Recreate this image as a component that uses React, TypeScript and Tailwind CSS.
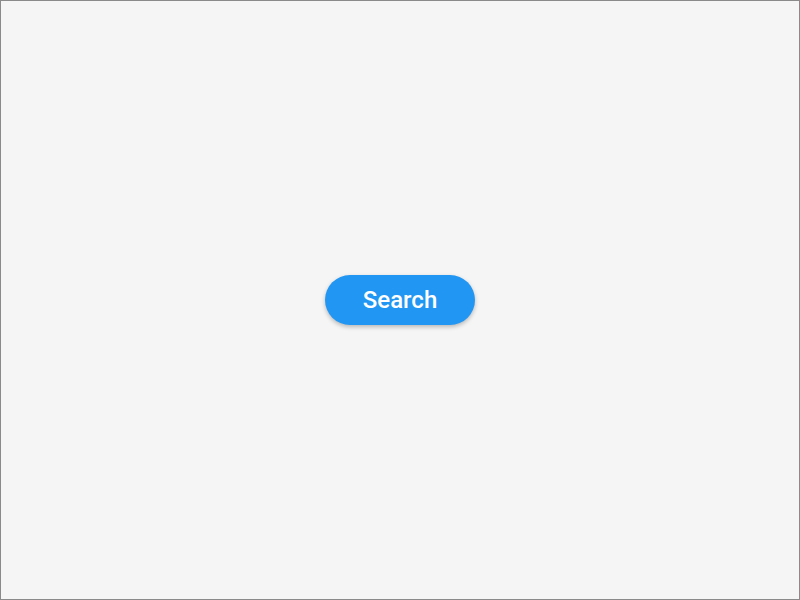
export default function App() {
  return (
    <div
      className="w-[800px] h-[600px] bg-[#f5f5f5] border border-[#8a8a8a] flex items-center justify-center"
      style={{ fontFamily: "Roboto, 'Liberation Sans', sans-serif" }}
    >
      <button className="w-[150px] h-[50px] rounded-full bg-[#2196f3] text-white text-[24px] font-medium shadow-[0_2px_4px_rgba(0,0,0,0.25)]">
        Search
      </button>
    </div>
  );
}
